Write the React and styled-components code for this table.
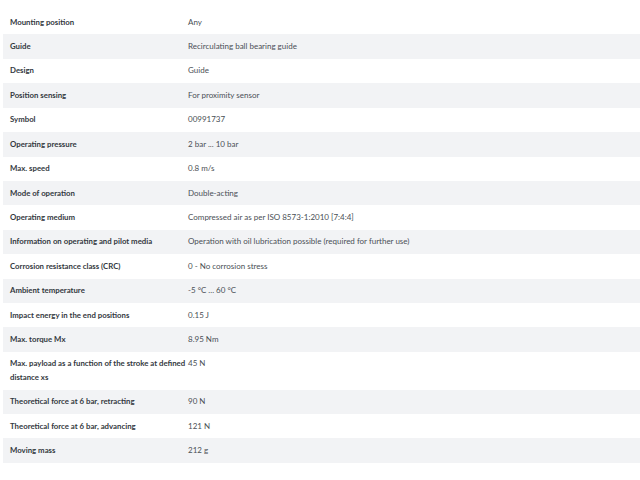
import React from "react";
import styled, { createGlobalStyle } from "styled-components";

const Global = createGlobalStyle`
  html, body { margin: 0; padding: 0; background: #fff; }
  body { font-family: "Lato", "Noto Sans", sans-serif; }
`;

const Table = styled.div`
  margin: 10px 0 0 3px;
  display: grid;
  grid-template-columns: 185px 1fr;
`;

const Row = styled.div`
  display: contents;
`;

const Cell = styled.div`
  background: ${(p) => (p.$striped ? "#f2f3f5" : "#ffffff")};
  padding: 5.57px 0 5.57px ${(p) => (p.$label ? "7px" : "0")};
  font-size: ${(p) => (p.$label ? "7.8px" : "8px")};
  line-height: 13.3px;
  font-weight: ${(p) => (p.$label ? 700 : 400)};
  color: ${(p) => (p.$label ? "#333840" : "#4a4f55")};
`;

const rows = [
  ["Mounting position", "Any"],
  ["Guide", "Recirculating ball bearing guide"],
  ["Design", "Guide"],
  ["Position sensing", "For proximity sensor"],
  ["Symbol", "00991737"],
  ["Operating pressure", "2 bar ... 10 bar"],
  ["Max. speed", "0.8 m/s"],
  ["Mode of operation", "Double-acting"],
  ["Operating medium", "Compressed air as per ISO 8573-1:2010 [7:4:4]"],
  ["Information on operating and pilot media", "Operation with oil lubrication possible (required for further use)"],
  ["Corrosion resistance class (CRC)", "0 - No corrosion stress"],
  ["Ambient temperature", "-5 °C ... 60 °C"],
  ["Impact energy in the end positions", "0.15 J"],
  ["Max. torque Mx", "8.95 Nm"],
  ["Max. payload as a function of the stroke at defined distance xs", "45 N"],
  ["Theoretical force at 6 bar, retracting", "90 N"],
  ["Theoretical force at 6 bar, advancing", "121 N"],
  ["Moving mass", "212 g"],
];

export default function App() {
  return (
    <>
      <Global />
      <Table>
        {rows.map(([k, v], i) => (
          <Row key={k}>
            <Cell $label $striped={i % 2 === 1}>{k}</Cell>
            <Cell $striped={i % 2 === 1}>{v}</Cell>
          </Row>
        ))}
      </Table>
    </>
  );
}
